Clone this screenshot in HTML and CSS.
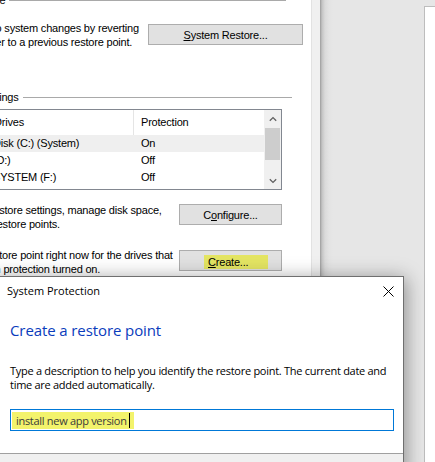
FILE: index.html
```html
<!DOCTYPE html>
<html lang="en">
<head>
<meta charset="utf-8">
<title>System Protection</title>
<link rel="stylesheet" href="styles.css">
</head>
<body>
<div class="screen">
  <div class="backdrop">
    <section class="tab-page">
      <div class="page-inner">
        <div class="group group--restore">
          <div class="group-head"><span class="group-label">System Restore</span><span class="group-rule"></span></div>
          <div class="group-row">
            <p class="desc">You can undo system changes by reverting<br>your computer to a previous restore point.</p>
            <button class="btn btn--wide"><u>S</u>ystem Restore...</button>
          </div>
        </div>

        <div class="group group--protect">
          <div class="group-head"><span class="group-label">Protection Settings</span><span class="group-rule"></span></div>
          <div class="list">
            <div class="list-body">
              <div class="list-row list-row--head">
                <span class="cell cell--name">Drives</span>
                <span class="cell cell--state">Protection</span>
              </div>
              <div class="list-row list-row--hot">
                <span class="cell cell--name">Disk (C:) (System)</span>
                <span class="cell cell--state">On</span>
              </div>
              <div class="list-row">
                <span class="cell cell--name">(D:)</span>
                <span class="cell cell--state">Off</span>
              </div>
              <div class="list-row">
                <span class="cell cell--name">SYSTEM (F:)</span>
                <span class="cell cell--state">Off</span>
              </div>
            </div>
            <div class="scrollbar">
              <span class="sb-arrow"><svg width="8" height="6" viewBox="0 0 8 6"><polyline points="0.8,4.8 4,1.6 7.2,4.8" fill="none" stroke="#606060" stroke-width="1.3"/></svg></span>
              <span class="sb-track"><span class="sb-thumb"></span></span>
              <span class="sb-arrow"><svg width="8" height="6" viewBox="0 0 8 6"><polyline points="0.8,1.2 4,4.4 7.2,1.2" fill="none" stroke="#606060" stroke-width="1.3"/></svg></span>
            </div>
          </div>
          <div class="group-row group-row--configure">
            <p class="desc">Configure restore settings, manage disk space,<br>and delete restore points.</p>
            <button class="btn">C<u>o</u>nfigure...</button>
          </div>
          <div class="group-row group-row--create">
            <p class="desc">Create a restore point right now for the drives that<br>have system protection turned on.</p>
            <button class="btn btn--marked"><span class="mark mark--btn"><u>C</u>reate...</span></button>
          </div>
        </div>
      </div>
    </section>
    <div class="strip"></div>
    <div class="desk"><div class="far-window"></div></div>
  </div>

  <div class="dialog">
    <div class="dialog-titlebar">
      <span class="dialog-title">System Protection</span>
      <span class="dialog-close"><svg width="11" height="11" viewBox="0 0 11 11"><path d="M0.5 0.5 L10.5 10.5 M10.5 0.5 L0.5 10.5" stroke="#000" stroke-width="1" fill="none"/></svg></span>
    </div>
    <div class="dialog-body">
      <h1 class="dialog-heading">Create a restore point</h1>
      <p class="dialog-text">Type a description to help you identify the restore point. The current date and<br>time are added automatically.</p>
      <div class="textbox"><span class="mark mark--field">install new app version<span class="caret"></span></span></div>
    </div>
    <div class="dialog-footer"></div>
  </div>
</div>
</body>
</html>
```

FILE: styles.css
```css
html, body {
  margin: 0;
  padding: 0;
}

body {
  background: #e6e6e6;
}

.screen {
  position: relative;
  width: 435px;
  height: 462px;
  overflow: hidden;
  font-family: "Liberation Sans", Arial, sans-serif;
  font-size: 11px;
  letter-spacing: -0.2px;
  color: #000;
}

.backdrop {
  display: flex;
  height: 100%;
}

/* ---------- background tab page ---------- */
.tab-page {
  width: 311px;
  flex: none;
  background: #fff;
  overflow: hidden;
}

.page-inner {
  margin-left: -70px;
  width: 381px;
}

.group-head {
  display: flex;
  align-items: flex-start;
  height: 14px;
  line-height: 14px;
}

.group-label {
  white-space: nowrap;
}

.group-rule {
  flex: 1;
  height: 1px;
  margin-top: 7px;
  margin-left: 4px;
  background: #a9a9a9;
}

.group--restore .group-head {
  margin-top: -7px;
  padding-right: 25px;
}

.group--protect .group-head {
  margin-top: 41px;
  padding-right: 19px;
}

.group-row {
  display: flex;
  align-items: flex-start;
  justify-content: space-between;
}

.group--restore .group-row {
  margin-top: 14px;
  padding-right: 8px;
}

.group-row--configure,
.group-row--create {
  padding-right: 29px;
}

.group-row--configure {
  margin-top: 13px;
}

.group-row--create {
  margin-top: 17px;
}

.desc {
  margin: 0;
  line-height: 14px;
  white-space: nowrap;
}

.group--restore .desc {
  padding-left: 7px;
}

.group--protect .desc {
  padding-left: 11px;
}

.btn {
  flex: none;
  box-sizing: border-box;
  width: 103px;
  height: 21px;
  padding: 0;
  border: 1px solid #adadad;
  background: #e1e1e1;
  font: inherit;
  letter-spacing: inherit;
  color: #000;
  line-height: 18px;
  text-align: center;
}

.btn--wide {
  width: 155px;
  margin-top: 3px;
}

.group-row--configure .btn {
  margin-top: 1px;
}

.group-row--create .btn {
  margin-top: 2px;
}

.btn--marked {
  text-align: left;
  padding-left: 24px;
}

.btn u,
.mark u {
  text-decoration: underline;
  text-underline-offset: 1px;
}

.mark--btn {
  display: inline-block;
  width: 64px;
  height: 14px;
  line-height: 14px;
  margin-top: 3px;
  padding-left: 4px;
  box-sizing: border-box;
  background: #e4e563;
  vertical-align: top;
}

/* list view */
.list {
  display: flex;
  box-sizing: border-box;
  height: 81px;
  margin-top: 5px;
  margin-left: 51px;
  margin-right: 29px;
  border: 1px solid #828790;
  background: #fff;
}

.list-body {
  flex: 1;
  display: flex;
  flex-direction: column;
}

.list-row {
  display: grid;
  grid-template-columns: 152px 1fr;
  height: 17px;
  line-height: 17px;
}

.list-row--head {
  height: 25px;
  line-height: 25px;
}

.list-row--head .cell--name {
  border-right: 1px solid #e5e5e5;
  padding-left: 12px;
}

.list-row--hot {
  background: #efefef;
}

.cell {
  white-space: nowrap;
  overflow: hidden;
}

.cell--name {
  padding-left: 11px;
}

.cell--state {
  padding-left: 7px;
}

.scrollbar {
  width: 17px;
  flex: none;
  display: flex;
  flex-direction: column;
  background: #f0f0f0;
}

.sb-arrow {
  height: 17px;
  display: flex;
  align-items: center;
  justify-content: center;
}

.sb-track {
  flex: 1;
  display: flex;
  flex-direction: column;
  padding: 1px 1px 0;
}

.sb-thumb {
  height: 32px;
  background: #cdcdcd;
}

/* right side */
.strip {
  width: 8px;
  flex: none;
  background: #f0f0f0;
  border-left: 1px solid #e2e2e2;
}

.desk {
  flex: 1;
  display: flex;
  padding: 6px 0 0 104px;
  background: linear-gradient(to right, #9c9c9c 0, #c4c4c4 2px, #dadada 5px, #e3e3e3 9px, #e6e6e6 13px);
}

.far-window {
  flex: 1;
  background: #fff;
  border-left: 1px solid #bdbdbd;
  border-top: 1px solid #bdbdbd;
}

/* ---------- dialog ---------- */
.dialog {
  position: absolute;
  left: -10px;
  top: 276px;
  width: 414px;
  height: 200px;
  box-sizing: border-box;
  display: flex;
  flex-direction: column;
  background: #fff;
  border: 1px solid #6f6f6f;
  box-shadow: 2px 2px 18px rgba(0, 0, 0, 0.38);
  font-family: "Open Sans", "Noto Sans", sans-serif;
  font-size: 11px;
  letter-spacing: 0;
}

.dialog-titlebar {
  display: flex;
  align-items: center;
  justify-content: space-between;
  height: 31px;
  padding: 0 9px 0 16px;
}

.dialog-title {
  line-height: 16px;
  margin-top: -3px;
  color: #000;
}

.dialog-close {
  display: flex;
  width: 11px;
  height: 11px;
  margin-top: -3px;
}

.dialog-body {
  padding: 0 9px 0 19px;
}

.dialog-heading {
  margin: 12px 0 0;
  font-size: 15px;
  font-weight: normal;
  line-height: 20px;
  color: #0a3cbc;
  letter-spacing: -0.1px;
}

.dialog-text {
  margin: 24px 0 0;
  line-height: 14px;
  color: #000;
  white-space: nowrap;
  letter-spacing: -0.28px;
}

.textbox {
  box-sizing: border-box;
  height: 22px;
  margin-top: 17px;
  padding: 2px 0 0 1px;
  border: 1px solid #0078d7;
  color: #3a3a3a;
}

.mark--field {
  display: inline-block;
  height: 17px;
  line-height: 17px;
  padding: 0 4px 0 4px;
  background: #f3f36c;
  vertical-align: top;
  letter-spacing: -0.3px;
}

.caret {
  display: inline-block;
  width: 1px;
  height: 15px;
  margin-left: 2px;
  background: #000;
  vertical-align: -3px;
}

.dialog-footer {
  flex: 1;
  margin-top: 22px;
  border-top: 1px solid #a0a0a0;
  background: #f0f0f0;
}
```
